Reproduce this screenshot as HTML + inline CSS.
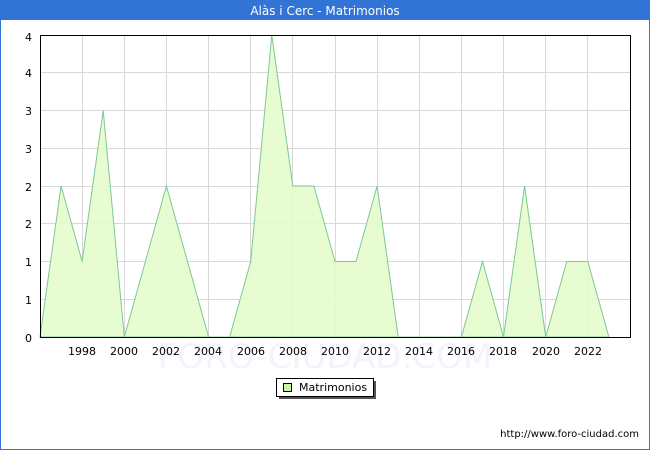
<!DOCTYPE html><html><head><style>body{margin:0}svg{display:block}</style></head><body>
<svg width="650" height="450" xmlns="http://www.w3.org/2000/svg" font-family="DejaVu Sans, Liberation Sans, sans-serif" font-size="11">
<rect x="0.5" y="0.5" width="649" height="449" fill="#fff" stroke="#3274d6"/>
<rect x="0" y="0" width="650" height="20" fill="#3274d6"/>
<text x="325" y="15" text-anchor="middle" fill="#fff" font-size="12">Alàs i Cerc - Matrimonios</text>
<text x="325" y="368" text-anchor="middle" fill="#f2f3fc" font-size="34">FORO-CIUDAD.COM</text>
<g stroke="#d8d8d8" stroke-width="1">
<line x1="40" y1="72.5" x2="630" y2="72.5"/><line x1="40" y1="110.5" x2="630" y2="110.5"/><line x1="40" y1="148.5" x2="630" y2="148.5"/><line x1="40" y1="186.5" x2="630" y2="186.5"/><line x1="40" y1="223.5" x2="630" y2="223.5"/><line x1="40" y1="261.5" x2="630" y2="261.5"/><line x1="40" y1="299.5" x2="630" y2="299.5"/>
<line x1="82.5" y1="35" x2="82.5" y2="337"/><line x1="124.5" y1="35" x2="124.5" y2="337"/><line x1="166.5" y1="35" x2="166.5" y2="337"/><line x1="208.5" y1="35" x2="208.5" y2="337"/><line x1="250.5" y1="35" x2="250.5" y2="337"/><line x1="292.5" y1="35" x2="292.5" y2="337"/><line x1="335.5" y1="35" x2="335.5" y2="337"/><line x1="377.5" y1="35" x2="377.5" y2="337"/><line x1="419.5" y1="35" x2="419.5" y2="337"/><line x1="461.5" y1="35" x2="461.5" y2="337"/><line x1="503.5" y1="35" x2="503.5" y2="337"/><line x1="545.5" y1="35" x2="545.5" y2="337"/><line x1="587.5" y1="35" x2="587.5" y2="337"/>
</g>
<polygon fill="#e4fccc" fill-opacity="0.9" stroke="#7ec894" stroke-width="1" points="40,337 61.1,186 82.1,261.5 103.2,110.5 124.3,337 145.4,261.5 166.4,186 187.5,261.5 208.6,337 229.6,337 250.7,261.5 271.8,35 292.8,186 313.9,186 335,261.5 356,261.5 377.1,186 398.2,337 461.4,337 482.5,261.5 503.5,337 524.6,186 545.7,337 566.8,261.5 587.8,261.5 608.9,337"/>
<rect x="40.5" y="35.5" width="590" height="302" fill="none" stroke="#000"/>
<g text-anchor="end" fill="#000">
<text x="32" y="41">4</text><text x="32" y="77">4</text><text x="32" y="115">3</text><text x="32" y="153">3</text><text x="32" y="191">2</text><text x="32" y="228">2</text><text x="32" y="266">1</text><text x="32" y="304">1</text><text x="32" y="342">0</text>
</g>
<g text-anchor="middle" fill="#000">
<text x="82" y="355">1998</text><text x="124" y="355">2000</text><text x="166" y="355">2002</text><text x="208" y="355">2004</text><text x="251" y="355">2006</text><text x="293" y="355">2008</text><text x="335" y="355">2010</text><text x="377" y="355">2012</text><text x="419" y="355">2014</text><text x="461" y="355">2016</text><text x="503" y="355">2018</text><text x="546" y="355">2020</text><text x="588" y="355">2022</text>
</g>
<rect x="279" y="381" width="97" height="18" fill="#555"/>
<rect x="276.5" y="378.5" width="97" height="18" fill="#fff" stroke="#000"/>
<rect x="283.5" y="383.5" width="8" height="8" fill="#ccf5a0" stroke="#000"/>
<text x="299" y="391" fill="#000">Matrimonios</text>
<text x="639" y="437" text-anchor="end" fill="#000" font-size="10">http://www.foro-ciudad.com</text>
</svg>
</body></html>
